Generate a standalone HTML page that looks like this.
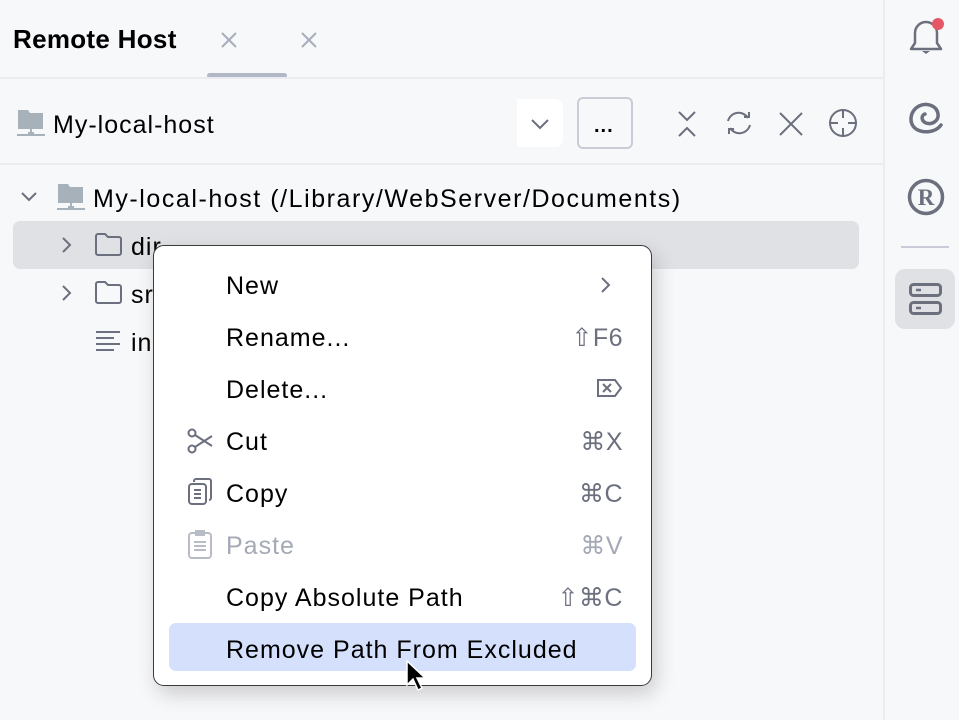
<!DOCTYPE html>
<html><head><meta charset="utf-8"><style>
*{margin:0;padding:0;box-sizing:border-box}
body{width:959px;height:720px;background:#f7f8fa;font-family:"Liberation Sans",sans-serif;position:relative;overflow:hidden;color:#000}
.abs{position:absolute}
.t{position:absolute;font-size:25px;white-space:nowrap;line-height:28px;letter-spacing:1px}
svg{position:absolute;overflow:visible}
.mi{position:absolute;left:72px;font-size:25px;line-height:28px;white-space:nowrap;letter-spacing:1px}
.sc{position:absolute;right:28px;font-size:25px;line-height:28px;color:#6c707e;white-space:nowrap;letter-spacing:0.5px}
</style></head><body>
<div class="t" style="left:13px;top:25px;font-weight:bold;font-size:26px;letter-spacing:0.3px">Remote Host</div>
<svg style="left:221px;top:32px" width="16" height="16"><path d="M1 1L15 15M15 1L1 15" stroke="#a8adbd" stroke-width="2"/></svg>
<svg style="left:301px;top:32px" width="16" height="16"><path d="M1 1L15 15M15 1L1 15" stroke="#a8adbd" stroke-width="2"/></svg>
<div class="abs" style="left:207px;top:73px;width:80px;height:5px;border-radius:3px;background:#b3b8c6"></div>
<div class="abs" style="left:0;top:77px;width:884px;height:2px;background:#ebecf0"></div>
<svg style="left:17px;top:109px" width="30" height="28"><path d="M1 1h10l2 3h13v16H1z" fill="#a7b1b9"/><path d="M0 26h28M14 20v6" stroke="#a7b1b9" stroke-width="2"/><rect x="11" y="23" width="6" height="4" fill="#a7b1b9"/></svg>
<div class="t" style="left:53px;top:111px">My-local-host</div>
<div class="abs" style="left:517px;top:99px;width:46px;height:48px;background:#fff;border-radius:0 8px 8px 0"></div>
<svg style="left:531px;top:119px" width="18" height="10"><path d="M1 1L9 9L17 1" stroke="#6c707e" stroke-width="2" fill="none"/></svg>
<div class="abs" style="left:577px;top:97px;width:56px;height:52px;border:2px solid #c9ccd6;border-radius:6px;background:#f7f8fa"></div>
<div class="t" style="left:594px;top:112px;font-weight:bold;font-size:20px">...</div>
<svg style="left:677px;top:111px" width="20" height="26"><path d="M2 1L10 9L18 1M2 25L10 17L18 25" stroke="#6c707e" stroke-width="2" fill="none"/></svg>
<svg style="left:723px;top:109px" width="32" height="28"><path d="M5 12A11 11 0 0 1 25 9M27 16A11 11 0 0 1 7 19" stroke="#6c707e" stroke-width="2" fill="none"/><path d="M21 8h5V3M11 20H6v5" stroke="#6c707e" stroke-width="2" fill="none"/></svg>
<svg style="left:779px;top:112px" width="24" height="24"><path d="M1 1L23 23M23 1L1 23" stroke="#6c707e" stroke-width="2"/></svg>
<svg style="left:829px;top:109px" width="30" height="30"><circle cx="14" cy="14" r="13" stroke="#6c707e" stroke-width="2" fill="none"/><path d="M14 0v9M14 19v9M0 14h9M19 14h9" stroke="#6c707e" stroke-width="2"/></svg>
<div class="abs" style="left:0;top:163px;width:884px;height:2px;background:#ebecf0"></div>
<svg style="left:21px;top:192px" width="16" height="10"><path d="M1 1L8 8L15 1" stroke="#6c707e" stroke-width="2" fill="none"/></svg>
<svg style="left:57px;top:183px" width="30" height="28"><path d="M1 1h10l2 3h13v16H1z" fill="#a7b1b9"/><path d="M0 26h28M14 20v6" stroke="#a7b1b9" stroke-width="2"/><rect x="11" y="23" width="6" height="4" fill="#a7b1b9"/></svg>
<div class="t" style="left:93px;top:185px;letter-spacing:1.55px">My-local-host (/Library/WebServer/Documents)</div>
<div class="abs" style="left:13px;top:221px;width:846px;height:48px;border-radius:7px;background:#dfe1e5"></div>
<svg style="left:62px;top:237px" width="10" height="16"><path d="M1 1L8 8L1 15" stroke="#6c707e" stroke-width="2" fill="none"/></svg>
<svg style="left:95px;top:233px" width="28" height="24"><path d="M1 3a2 2 0 0 1 2-2h7l3 3h11a2 2 0 0 1 2 2v14a2 2 0 0 1-2 2H3a2 2 0 0 1-2-2z" stroke="#6c707e" stroke-width="2" fill="none"/></svg>
<div class="t" style="left:131px;top:233px">dir</div>
<svg style="left:62px;top:285px" width="10" height="16"><path d="M1 1L8 8L1 15" stroke="#6c707e" stroke-width="2" fill="none"/></svg>
<svg style="left:95px;top:281px" width="28" height="24"><path d="M1 3a2 2 0 0 1 2-2h7l3 3h11a2 2 0 0 1 2 2v14a2 2 0 0 1-2 2H3a2 2 0 0 1-2-2z" stroke="#6c707e" stroke-width="2" fill="none"/></svg>
<div class="t" style="left:131px;top:281px">src</div>
<svg style="left:96px;top:331px" width="26" height="20"><path d="M0 1h24M0 7h18M0 13h24M0 19h18" stroke="#6c707e" stroke-width="2"/></svg>
<div class="t" style="left:131px;top:329px">index</div>
<div class="abs" style="left:883px;top:0;width:2px;height:720px;background:#ebecf0"></div>
<svg style="left:908px;top:18px" width="36" height="38"><path d="M3 31h30l-4-6V15A11 11 0 0 0 7 15v10z" stroke="#6c707e" stroke-width="2.5" fill="none" stroke-linejoin="round"/><path d="M14 33h8l-4 3z" fill="#6c707e"/><circle cx="30" cy="6" r="6" fill="#e55765"/></svg>
<svg style="left:908px;top:101px" width="36" height="34"><path d="M33 24C28 31 16 33 8 28C0 22 2 10 11 5C19 1 29 5 30 13C31 20 24 24 18 22C13 20 13 14 17 13" stroke="#6c707e" stroke-width="3.5" fill="none" stroke-linecap="round"/></svg>
<svg style="left:907px;top:178px" width="38" height="38"><circle cx="19" cy="19" r="16.5" stroke="#6c707e" stroke-width="3.5" fill="none"/><text x="19" y="27" text-anchor="middle" font-family="Liberation Serif" font-weight="bold" font-size="23" fill="#6c707e">R</text></svg>
<div class="abs" style="left:901px;top:246px;width:48px;height:2px;background:#c9ccd6"></div>
<div class="abs" style="left:895px;top:269px;width:60px;height:60px;border-radius:10px;background:#dfe1e5"></div>
<svg style="left:909px;top:283px" width="34" height="33"><rect x="1.5" y="1.5" width="30" height="11" rx="3" stroke="#6c707e" stroke-width="3" fill="none"/><rect x="1.5" y="19.5" width="30" height="11" rx="3" stroke="#6c707e" stroke-width="3" fill="none"/><path d="M7 7h5M7 25h5" stroke="#6c707e" stroke-width="2.5"/></svg>
<div class="abs" style="left:153px;top:245px;width:499px;height:441px;background:#fff;border:1px solid #3a3a3a;border-radius:11px;box-shadow:4px 8px 20px rgba(0,0,0,0.18)">
  <div class="mi" style="top:26px">New</div>
  <svg style="left:447px;top:31px" width="10" height="16"><path d="M1 1L8 8L1 15" stroke="#6c707e" stroke-width="2" fill="none"/></svg>
  <div class="mi" style="top:78px">Rename...</div><div class="sc" style="top:78px">⇧F6</div>
  <div class="mi" style="top:130px">Delete...</div>
  <svg style="left:443px;top:133px" width="26" height="18"><path d="M1 1h17l6 8-6 8H1z" stroke="#6c707e" stroke-width="2" fill="none"/><path d="M6 5l8 8M14 5l-8 8" stroke="#6c707e" stroke-width="2"/></svg>
  <svg style="left:33px;top:183px" width="26" height="24"><circle cx="5" cy="4" r="3.5" stroke="#6c707e" stroke-width="2" fill="none"/><circle cx="5" cy="20" r="3.5" stroke="#6c707e" stroke-width="2" fill="none"/><path d="M8 6L25 17M8 18L25 7" stroke="#6c707e" stroke-width="2"/></svg>
  <div class="mi" style="top:182px">Cut</div><div class="sc" style="top:182px">⌘X</div>
  <svg style="left:34px;top:232px" width="26" height="28"><rect x="1" y="6" width="17" height="20" rx="3" stroke="#6c707e" stroke-width="2" fill="none"/><path d="M6 4V3a2 2 0 0 1 2-2h13a2 2 0 0 1 2 2v17a2 2 0 0 1-2 2M6 12h7M6 16h7M6 20h7" stroke="#6c707e" stroke-width="2" fill="none"/></svg>
  <div class="mi" style="top:234px">Copy</div><div class="sc" style="top:234px">⌘C</div>
  <svg style="left:34px;top:284px" width="24" height="30"><rect x="1" y="3" width="22" height="25" rx="3" stroke="#b8bcc6" stroke-width="2" fill="none"/><path d="M8 1h8v4H8zM6 12h12M6 16h12M6 20h12" stroke="#b8bcc6" stroke-width="2" fill="none"/></svg>
  <div class="mi" style="top:286px;color:#a4a9b6">Paste</div><div class="sc" style="top:286px;color:#a4a9b6">⌘V</div>
  <div class="mi" style="top:338px">Copy Absolute Path</div><div class="sc" style="top:338px">⇧⌘C</div>
  <div class="abs" style="left:15px;top:377px;width:467px;height:48px;border-radius:7px;background:#d4e0fc"></div>
  <div class="mi" style="top:390px">Remove Path From Excluded</div>
</div>
<svg style="left:406px;top:660px" width="22" height="34"><path d="M1 1v24l6-6 5 11 4-2-5-10h8z" fill="#000" stroke="#fff" stroke-width="1.5"/></svg>
</body></html>
